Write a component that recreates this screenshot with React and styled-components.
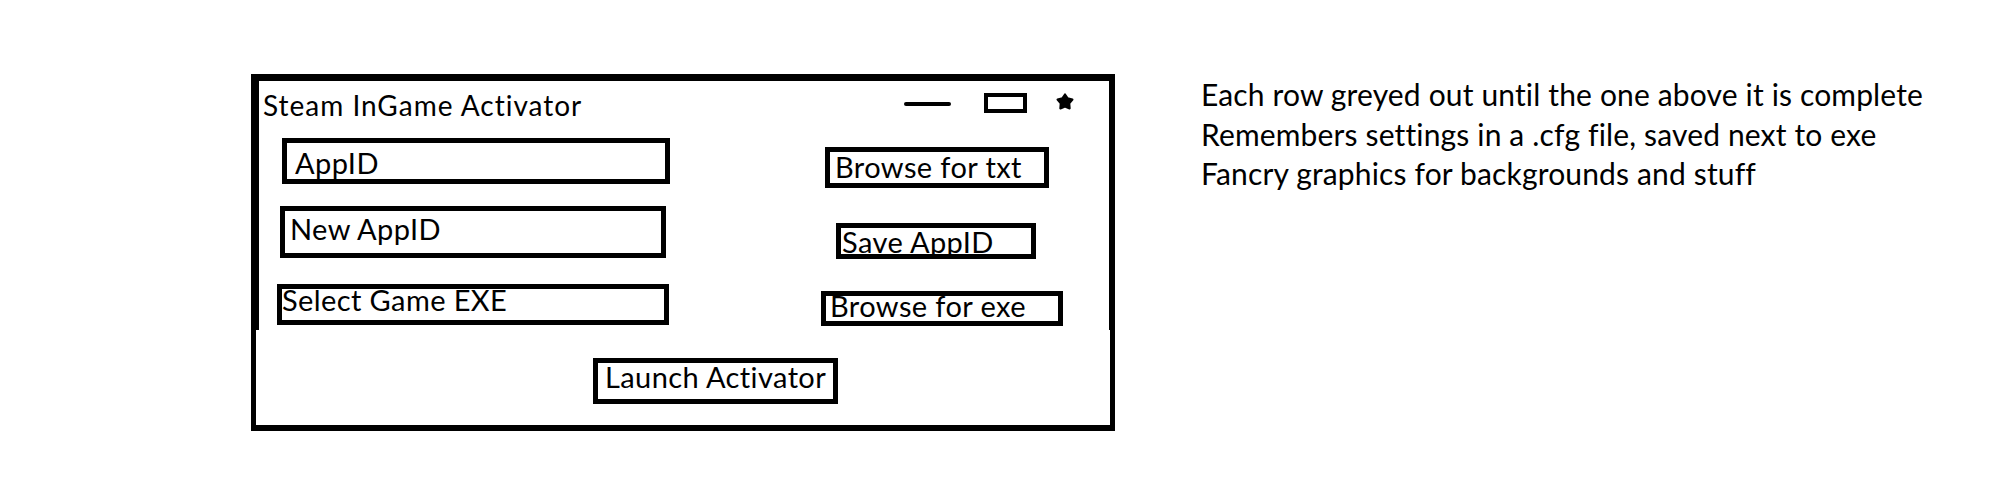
import React from 'react'
import styled, { createGlobalStyle } from 'styled-components';

const GlobalStyle = createGlobalStyle`
    body{
        margin: 0;
        background: #fff;
        color: #000;
        font-family: Lato, "Open Sans", sans-serif;
    }
`;

const rows = [
    { field: 'AppID', fx: 23, fw: 388, fh: 46, fpad: 8, fshift: 2, gap: 0, height: 50,
      button: 'Browse for txt', bx: 155, by: 9, bw: 224, bh: 41, bpad: 5, bshift: 0 },
    { field: 'New AppID', fx: 21, fw: 386, fh: 52, fpad: 5, fshift: -3, gap: 18, height: 53,
      button: 'Save AppID', bx: 170, by: 17, bw: 200, bh: 36, bpad: 1, bshift: 1 },
    { field: 'Select Game EXE', fx: 18, fw: 392, fh: 41, fpad: 0, fshift: -4, gap: 25, height: 42,
      button: 'Browse for exe', bx: 152, by: 7, bw: 242, bh: 35, bpad: 4, bshift: -2 },
];

const notes = [
    'Each row greyed out until the one above it is complete',
    'Remembers settings in a .cfg file, saved next to exe',
    'Fancry graphics for backgrounds and stuff',
];

function StarIcon() {
    return (
        <svg width="20" height="20" viewBox="0 0 20 20">
            <polygon
                points="10,2.5 12.6,6.4 17.4,7.6 14.2,11.4 14.6,16.4 10,14.6 5.4,16.4 5.8,11.4 2.6,7.6 7.4,6.4"
                fill="#000" stroke="#000" strokeWidth="2.2" strokeLinejoin="round"/>
        </svg>
    )
}

function App() {
    return (
        <>
            <GlobalStyle/>
            <Page>
                <Window>
                    <Upper>
                        <TitleBar>
                            <Title>Steam InGame Activator</Title>
                            <Controls>
                                <MinimizeStroke/>
                                <MaximizeBox/>
                                <CloseMark><StarIcon/></CloseMark>
                            </Controls>
                        </TitleBar>
                        {rows.map((r) => (
                            <Row key={r.field} $gap={r.gap} $height={r.height}>
                                <Field $x={r.fx} $w={r.fw} $h={r.fh} $pad={r.fpad} $shift={r.fshift}>
                                    {r.field}
                                </Field>
                                <ActionButton $x={r.bx} $y={r.by} $w={r.bw} $h={r.bh} $pad={r.bpad} $shift={r.bshift}>
                                    {r.button}
                                </ActionButton>
                            </Row>
                        ))}
                    </Upper>
                    <Footer>
                        <ActionButton $x={0} $y={0} $w={245} $h={46} $pad={7} $shift={-4}>
                            Launch Activator
                        </ActionButton>
                    </Footer>
                </Window>
                <Notes>
                    {notes.map((n) => <p key={n}>{n}</p>)}
                </Notes>
            </Page>
        </>
    )
}

const Page = styled.div`
    display: flex;
    align-items: flex-start;
    padding: 74px 0 0 251px;
`;

const Window = styled.div`
    width: 864px;
    flex-shrink: 0;
    display: flex;
    flex-direction: column;
`;

const Upper = styled.div`
    box-sizing: border-box;
    height: 256px;
    border: solid #000;
    border-width: 7px 6px 0 8px;
    display: flex;
    flex-direction: column;
`;

const TitleBar = styled.div`
    height: 57px;
    display: flex;
    align-items: flex-start;
    padding-left: 4px;
`;

const Title = styled.div`
    font-size: 28px;
    letter-spacing: 1px;
    line-height: 1.2;
    padding-top: 8px;
`;

const Controls = styled.div`
    margin-left: auto;
    margin-right: 34px;
    margin-top: 11px;
    height: 21px;
    display: flex;
    align-items: center;
`;

const MinimizeStroke = styled.span`
    width: 47px;
    height: 4px;
    background: #000;
    border-radius: 3px;
    margin-top: 2px;
`;

const MaximizeBox = styled.span`
    box-sizing: border-box;
    width: 43px;
    height: 20px;
    border: 4px solid #000;
    margin-left: 33px;
`;

const CloseMark = styled.span`
    display: flex;
    margin-left: 28px;
    margin-top: -2px;
`;

const Row = styled.div`
    display: flex;
    align-items: flex-start;
    margin-top: ${p => p.$gap}px;
    height: ${p => p.$height}px;
`;

const Box = styled.div`
    box-sizing: border-box;
    display: flex;
    align-items: center;
    flex-shrink: 0;
    width: ${p => p.$w}px;
    height: ${p => p.$h}px;
    margin-left: ${p => p.$x}px;
    padding-left: ${p => p.$pad}px;
    padding-top: ${p => Math.max(0, p.$shift * 2)}px;
    padding-bottom: ${p => Math.max(0, -p.$shift * 2)}px;
    border: 5px solid #000;
    font-size: 29px;
    letter-spacing: 0.4px;
    line-height: 1.2;
    white-space: nowrap;
`;

const Field = styled(Box)``;

const ActionButton = styled(Box)`
    margin-top: ${p => p.$y}px;
`;

const Footer = styled.div`
    box-sizing: border-box;
    height: 101px;
    border: solid #000;
    border-width: 0 5px 6px 5px;
    padding: 28px 0 0 337px;
`;

const Notes = styled.div`
    margin-left: 86px;
    margin-top: 1px;
    font-size: 30px;
    letter-spacing: 0.15px;
    line-height: 39.5px;
    white-space: nowrap;
    p{
        margin: 0;
    }
`;

export default App;
